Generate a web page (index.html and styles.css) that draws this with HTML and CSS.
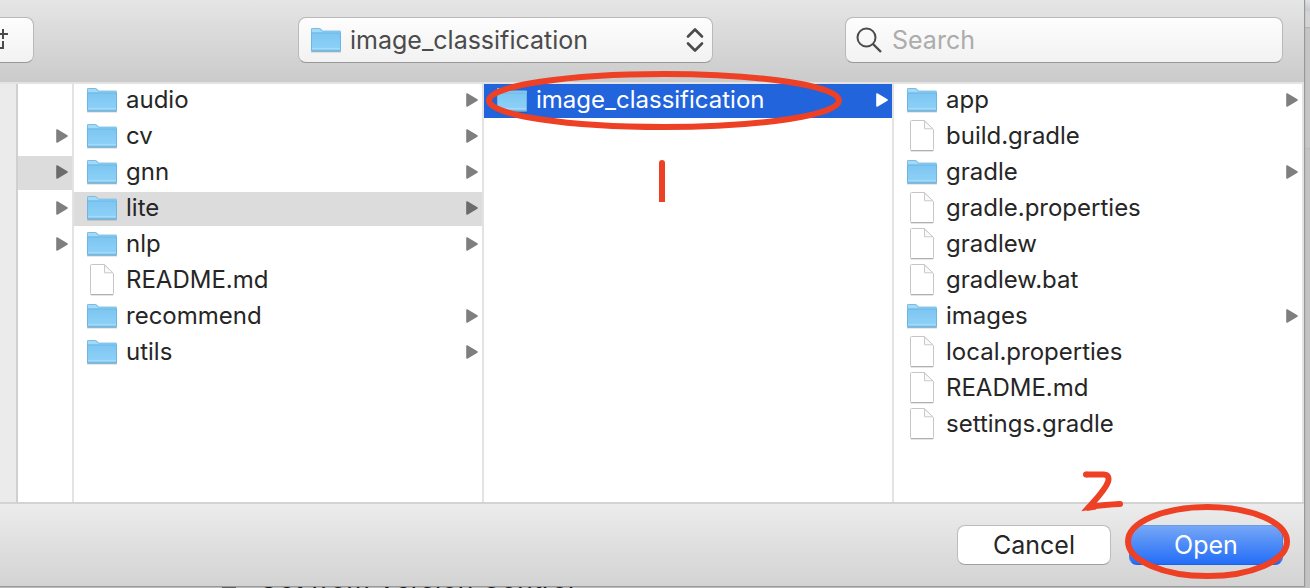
FILE: index.html
```html
<!DOCTYPE html>
<html lang="en">
<head>
<meta charset="utf-8">
<title>Open</title>
<link rel="stylesheet" href="styles.css">
</head>
<body>
<svg class="defs" aria-hidden="true">
  <defs>
    <linearGradient id="folder-fill" x1="0" y1="0" x2="0" y2="1">
      <stop offset="0" stop-color="#7cc6f2"/>
      <stop offset="1" stop-color="#90d2f8"/>
    </linearGradient>
    <symbol id="folder" viewBox="0 0 32 32">
      <path d="M1 27.500h30" stroke="#000" stroke-opacity=".18" stroke-width="2"/>
      <path d="M1 9V5.200Q1 4 2.200 4H9.500Q10.500 4 11.300 5L13 6.700H30Q31 6.700 31 8V12H1z" fill="#a3dafa"/>
      <path d="M1.500 9V5.200Q1.500 4.500 2.200 4.500H9.500L12.500 7.200H30.500" fill="none" stroke="#79bce2" stroke-width="1"/>
      <path d="M1 8.500H31V26.500Q31 27.500 30 27.500H2Q1 27.500 1 26.500z" fill="url(#folder-fill)"/>
      <path d="M1 9H31M1.500 9V26.500M30.500 9V26.500" fill="none" stroke="#6eb6df" stroke-width="1"/>
      <path d="M2 24.500H30" stroke="#a5dbfa"/>
      <path d="M1.500 27H30.500" stroke="#609fc4"/>
    </symbol>
    <symbol id="file" viewBox="0 0 32 32">
      <path d="M4.500 31H27.500" stroke="#000" stroke-opacity=".2"/>
      <path d="M5.500 .5H18.500L27.500 9.500V29.500Q27.500 30.500 26.500 30.500H5.500Q4.500 30.500 4.500 29.500V1.500Q4.500 .5 5.500 .5z" fill="#fff" stroke="#c6c6c6"/>
      <path d="M18.500 1V8.800H27z" fill="#fafafa" stroke="#c9c9c9"/>
      <path d="M5 30.500H27" stroke="#b0b0b0"/>
    </symbol>
    <symbol id="arrow" viewBox="0 0 12 14">
      <path d="M1 1V13L11 7z" fill="currentColor" stroke="currentColor" stroke-width="1.600" stroke-linejoin="round"/>
    </symbol>
  </defs>
</svg>

<div class="desktop">
  <p class="behind"><span class="behind-mark"></span>Get from Version Control</p>

  <main class="dialog">
    <header class="toolbar">
      <button class="group-button" type="button" aria-label="Group items">
        <svg viewBox="0 0 10 24" aria-hidden="true"><path d="M0 6H8M3 1V11M3 13V20H0" fill="none" stroke="#4a4a4a" stroke-width="2"/></svg>
      </button>
      <div class="popup">
        <svg class="icon" aria-hidden="true"><use href="#folder"/></svg>
        <select aria-label="Current folder"><option>image_classification</option></select>
        <svg class="stepper" viewBox="0 0 18 26" aria-hidden="true"><path d="M2 9.500L9 2.500L16 9.500M2 16.500L9 23.500L16 16.500" fill="none" stroke="#4b4b4b" stroke-width="2.600" stroke-linecap="round" stroke-linejoin="round"/></svg>
      </div>
      <div class="search">
        <svg class="lens" viewBox="0 0 26 26" aria-hidden="true"><circle cx="10.500" cy="10.500" r="9" fill="none" stroke="#4b4b4b" stroke-width="2"/><path d="M17 17L25 25" stroke="#4b4b4b" stroke-width="2.400"/></svg>
        <input type="search" placeholder="Search" aria-label="Search">
      </div>
    </header>

    <div class="browser">
      <div class="sidebar"></div>
      <ul class="column">
        <li class="blank"></li>
        <li><button class="row" type="button" aria-label="Folder 1"><svg class="arrow"><use href="#arrow"/></svg></button></li>
        <li><button class="row current" type="button" aria-label="Folder 2"><svg class="arrow"><use href="#arrow"/></svg></button></li>
        <li><button class="row" type="button" aria-label="Folder 3"><svg class="arrow"><use href="#arrow"/></svg></button></li>
        <li><button class="row" type="button" aria-label="Folder 4"><svg class="arrow"><use href="#arrow"/></svg></button></li>
      </ul>
      <ul class="column">
        <li><button class="row" type="button"><svg class="icon"><use href="#folder"/></svg><span>audio</span><svg class="arrow"><use href="#arrow"/></svg></button></li>
        <li><button class="row" type="button"><svg class="icon"><use href="#folder"/></svg><span>cv</span><svg class="arrow"><use href="#arrow"/></svg></button></li>
        <li><button class="row" type="button"><svg class="icon"><use href="#folder"/></svg><span>gnn</span><svg class="arrow"><use href="#arrow"/></svg></button></li>
        <li><button class="row current" type="button"><svg class="icon"><use href="#folder"/></svg><span>lite</span><svg class="arrow"><use href="#arrow"/></svg></button></li>
        <li><button class="row" type="button"><svg class="icon"><use href="#folder"/></svg><span>nlp</span><svg class="arrow"><use href="#arrow"/></svg></button></li>
        <li><button class="row" type="button"><svg class="icon"><use href="#file"/></svg><span>README.md</span></button></li>
        <li><button class="row" type="button"><svg class="icon"><use href="#folder"/></svg><span>recommend</span><svg class="arrow"><use href="#arrow"/></svg></button></li>
        <li><button class="row" type="button"><svg class="icon"><use href="#folder"/></svg><span>utils</span><svg class="arrow"><use href="#arrow"/></svg></button></li>
      </ul>
      <ul class="column">
        <li><button class="row selected" type="button"><svg class="icon"><use href="#folder"/></svg><span>image_classification</span><svg class="arrow"><use href="#arrow"/></svg></button></li>
      </ul>
      <ul class="column">
        <li><button class="row" type="button"><svg class="icon"><use href="#folder"/></svg><span>app</span><svg class="arrow"><use href="#arrow"/></svg></button></li>
        <li><button class="row" type="button"><svg class="icon"><use href="#file"/></svg><span>build.gradle</span></button></li>
        <li><button class="row" type="button"><svg class="icon"><use href="#folder"/></svg><span>gradle</span><svg class="arrow"><use href="#arrow"/></svg></button></li>
        <li><button class="row" type="button"><svg class="icon"><use href="#file"/></svg><span>gradle.properties</span></button></li>
        <li><button class="row" type="button"><svg class="icon"><use href="#file"/></svg><span>gradlew</span></button></li>
        <li><button class="row" type="button"><svg class="icon"><use href="#file"/></svg><span>gradlew.bat</span></button></li>
        <li><button class="row" type="button"><svg class="icon"><use href="#folder"/></svg><span>images</span><svg class="arrow"><use href="#arrow"/></svg></button></li>
        <li><button class="row" type="button"><svg class="icon"><use href="#file"/></svg><span>local.properties</span></button></li>
        <li><button class="row" type="button"><svg class="icon"><use href="#file"/></svg><span>README.md</span></button></li>
        <li><button class="row" type="button"><svg class="icon"><use href="#file"/></svg><span>settings.gradle</span></button></li>
      </ul>
    </div>

    <footer class="actions">
      <button class="action" type="button">Cancel</button>
      <button class="action primary" type="button">Open</button>
    </footer>
  </main>

  <svg class="marks" viewBox="0 0 1310 588" aria-hidden="true">
    <g fill="none" stroke="#ed4024" stroke-width="6">
      <ellipse cx="664" cy="100.500" rx="175" ry="26.500"/>
      <path d="M662 163V202"/>
      <ellipse cx="1207.500" cy="541.500" rx="79.500" ry="34.500"/>
      <path d="M1086 474.500H1104Q1110 475 1108 482C1105 490 1098 497 1089 507Q1106 504.500 1120 504"/>
    </g>
    <g fill="#ed4024">
      <circle cx="662" cy="163" r="3"/>
      <circle cx="1086" cy="474.500" r="3"/>
      <circle cx="1120" cy="504" r="3"/>
      <path d="M1085.500 506L1087 505V511L1096 509.500L1094 502z"/>
    </g>
  </svg>
</div>
</body>
</html>
```
FILE: styles.css
```css
* { box-sizing: border-box; }

body {
  margin: 0;
  font-family: Inter, "Liberation Sans", sans-serif;
  font-size: 24px;
  color: #262626;
}

button, input, select { font: inherit; color: inherit; }

.defs { position: absolute; width: 0; height: 0; }

.desktop {
  position: relative;
  display: flex;
  min-height: 100vh;
  padding: 0 6px 2px 0;
  overflow: hidden;
  background: linear-gradient(#e0e2e5 0, #c9cbd0 10px, #d4d4d4 12px, #d4d4d4 27px, #b0b0b0 27px, #c6c6c6 29px, #c6c6c6 148px, #b8b8b8 148px, #c3c3c3 150px);
}

.behind {
  position: absolute;
  left: 222px;
  bottom: -7px;
  display: flex;
  align-items: flex-end;
  gap: 22px;
  margin: 0;
  font-size: 27px;
  line-height: 32px;
  color: #000;
}

.behind-mark { width: 14px; height: 14px; background: #555; }

.dialog {
  position: relative;
  flex: 1;
  display: flex;
  flex-direction: column;
  background: #fff;
  box-shadow: 0 0 1px 1px #999;
}

.toolbar {
  display: grid;
  grid-template-columns: 34px 2fr 415px 1fr 438px;
  align-items: center;
  height: 82px;
  padding: 0 21px 2px 0;
  background: linear-gradient(#e5e5e5, #cbcbcb);
  font-size: 25px;
}

.group-button, .popup, .search {
  display: flex;
  align-items: center;
  height: 46px;
  border: 1px solid #b9b9b9;
  border-bottom-color: #999;
  border-radius: 8px;
  background: linear-gradient(#fdfdfd, #f2f2f2);
}

.group-button {
  padding: 0;
  border-left: 0;
  border-radius: 0 8px 8px 0;
}

.group-button svg { width: 10px; height: 24px; }

.popup {
  grid-column: 3;
  gap: 8px;
  padding: 0 8px 0 11px;
}

.popup select {
  flex: 1;
  min-width: 0;
  padding: 0;
  border: 0;
  appearance: none;
  background: none;
  color: #4b4b4b;
}

.stepper { width: 18px; height: 26px; }

.search {
  grid-column: 5;
  gap: 10px;
  padding: 0 10px;
}

.search input {
  flex: 1;
  min-width: 0;
  padding: 0;
  border: 0;
  outline: 0;
  appearance: none;
  background: none;
}

.search input::placeholder { color: #acacac; opacity: 1; }

.lens { width: 26px; height: 26px; }

.browser {
  flex: 1;
  display: grid;
  grid-template-columns: 18px 56px 1fr 1fr 1fr;
  border-top: 2px solid #e3e3e3;
}

.sidebar {
  background: #ebebeb;
  border-right: 2px solid #d0d0d0;
}

.column {
  display: flex;
  flex-direction: column;
  gap: 2px;
  min-width: 0;
  margin: 0;
  padding: 0;
  border-right: 2px solid #e3e3e3;
  list-style: none;
}

.blank { height: 34px; }

.row {
  display: flex;
  align-items: center;
  gap: 8px;
  width: 100%;
  height: 34px;
  padding: 0 4px 2px 12px;
  border: 0;
  background: none;
  line-height: 32px;
  text-align: left;
}

.row.current { background: #dcdcdc; }

.row.selected {
  background: #2264dc;
  color: #fff;
}

.icon { flex: none; width: 32px; height: 32px; }

.arrow {
  flex: none;
  width: 12px;
  height: 14px;
  margin-left: auto;
  color: #7f7f7f;
}

.current .arrow { color: #6c6c6c; }
.selected .arrow { color: #fff; }

.actions {
  display: flex;
  justify-content: flex-end;
  align-items: center;
  gap: 18px;
  height: 84px;
  padding: 0 21px 0 0;
  border-top: 2px solid #d3d3d3;
  background: linear-gradient(#ececec, #d3d3d3);
  font-size: 25px;
}

.action {
  width: 154px;
  height: 40px;
  padding: 0;
  border: 1px solid #bcbcbc;
  border-bottom-color: #a0a0a0;
  border-radius: 8px;
  background: #fff;
}

.action.primary {
  border-color: #6b9cea #4180ee #1d62e6;
  background: linear-gradient(#75a7f6, #246df8);
  color: #fff;
}

.marks {
  position: absolute;
  top: 0;
  left: 0;
  width: 100%;
  height: 100%;
  pointer-events: none;
}
```
